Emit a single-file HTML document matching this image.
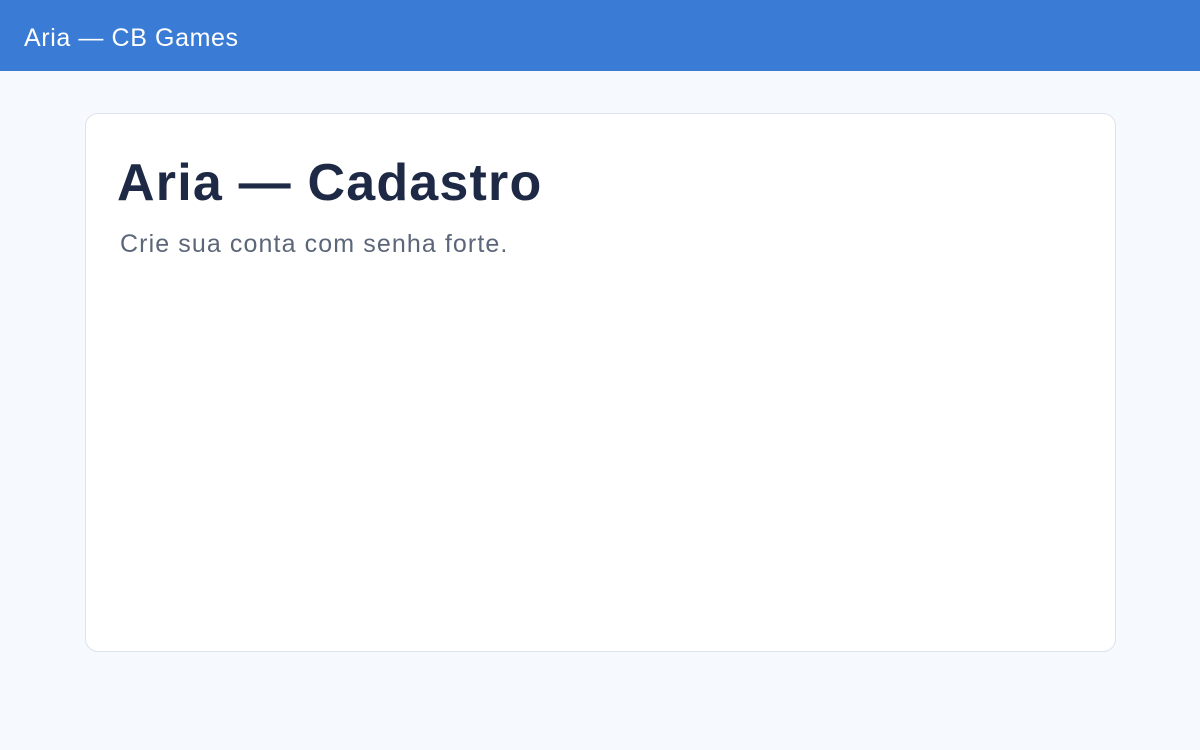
<!DOCTYPE html>
<html><head><meta charset="utf-8"><style>
html,body{margin:0;padding:0;width:1200px;height:750px;background:#f6f9fd;font-family:"Liberation Sans",sans-serif;overflow:hidden}
.top{height:71px;background:#3a7bd6;color:#fff;font-size:25px;line-height:76px;padding-left:24px;box-sizing:border-box;letter-spacing:0.6px}
.card{position:absolute;left:85px;top:113px;width:1031px;height:539px;box-sizing:border-box;background:#fff;border:1.5px solid #dde3ec;border-radius:13px}
h1{position:absolute;left:31px;top:38px;margin:0;font-size:52px;font-weight:bold;color:#1e2a45;letter-spacing:1.2px;line-height:1.2}
p{position:absolute;left:34px;top:115px;margin:0;font-size:25px;color:#5b6679;line-height:1.2;letter-spacing:1.1px}
</style></head><body>
<div class="top">Aria — CB Games</div>
<div class="card"><h1>Aria — Cadastro</h1><p>Crie sua conta com senha forte.</p></div>
</body></html>
